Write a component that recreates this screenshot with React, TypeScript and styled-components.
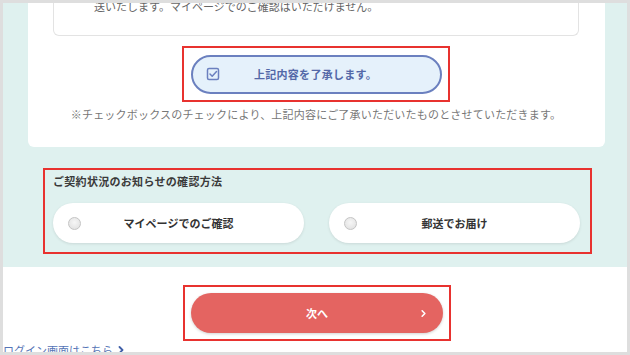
import styled, { createGlobalStyle } from "styled-components";

const GlobalStyle = createGlobalStyle`
  body {
    margin: 0;
    font-family: "Noto Sans CJK JP", "Noto Sans", sans-serif;
  }
`;

const Frame = styled.div`
  width: 630px;
  height: 355px;
  box-sizing: border-box;
  border: 3px solid #dedede;
  background: #ffffff;
  overflow: hidden;
  display: flex;
  flex-direction: column;
`;

const TealSection = styled.div`
  background: #dff1ef;
  padding: 0 22px 13px 25px;
`;

const Card = styled.div`
  background: #ffffff;
  border-radius: 0 0 6px 6px;
  padding: 0 26px 26px 25px;
`;

const InnerBox = styled.div`
  height: 33px;
  box-sizing: border-box;
  border: 1px solid #e3e3e3;
  border-top: none;
  border-radius: 0 0 6px 6px;
  padding-left: 40px;
  overflow: hidden;
`;

const InnerText = styled.p`
  margin: -4px 0 0;
  font-size: 11px;
  line-height: 14px;
  color: #666;
`;

// red annotation frame around a highlighted control
const Highlight = styled.div<{ $left?: number }>`
  width: 268px;
  height: 56px;
  box-sizing: border-box;
  border: 2px solid #e8322f;
  display: flex;
  align-items: center;
  justify-content: center;
  margin: ${(p) => (p.$left !== undefined ? `0 0 0 ${p.$left}px` : "0 auto")};
`;

const AgreeWrap = styled.div`
  padding-top: 10px;
`;

const AgreeButton = styled.button`
  width: 251px;
  height: 39px;
  box-sizing: border-box;
  border: 2px solid #6b80bf;
  border-radius: 20px;
  background: #e5f1fb;
  display: grid;
  grid-template-columns: 14px 1fr 14px;
  align-items: center;
  padding: 0 14px 0 13px;
  font-family: inherit;
  font-size: 11px;
  font-weight: 700;
  letter-spacing: 0.3px;
  color: #5368a8;
  cursor: pointer;
`;

const Note = styled.p`
  margin: 5px 0 0;
  font-size: 11px;
  line-height: 14px;
  letter-spacing: 0.2px;
  color: #777;
  text-align: center;
`;

const MethodBox = styled.div`
  margin: 21px 13px 0 15px;
  height: 86px;
  box-sizing: border-box;
  border: 2px solid #e8322f;
  padding: 4px 10px 9px 8px;
`;

const MethodTitle = styled.div`
  font-size: 11px;
  line-height: 14px;
  font-weight: 700;
  color: #3a3a3a;
  letter-spacing: 0.3px;
`;

const Options = styled.div`
  margin-top: 15px;
  display: grid;
  grid-template-columns: 251px 251px;
  gap: 25px;
`;

const OptionPill = styled.label`
  height: 40px;
  border-radius: 20px;
  background: #ffffff;
  box-shadow: 0 1px 3px rgba(0, 0, 0, 0.1);
  display: grid;
  grid-template-columns: 12px 1fr 12px;
  align-items: center;
  padding: 0 15px;
  font-size: 11px;
  font-weight: 700;
  color: #333;
  text-align: center;
  cursor: pointer;
`;

const Radio = styled.span`
  width: 11px;
  height: 11px;
  border-radius: 50%;
  border: 1px solid #c4c4c4;
  background: radial-gradient(circle at 50% 40%, #f6f6f6, #dedede);
`;

const NextWrap = styled.div`
  margin-top: 18px;
`;

const NextButton = styled.button`
  width: 252px;
  height: 40px;
  border: none;
  border-radius: 20px;
  background: #e46461;
  box-shadow: 0 1px 3px rgba(0, 0, 0, 0.18);
  display: grid;
  grid-template-columns: 10px 1fr 10px;
  align-items: center;
  padding: 0 14px;
  font-family: inherit;
  font-size: 11px;
  font-weight: 700;
  color: #ffffff;
  cursor: pointer;
`;

const LoginLink = styled.a`
  margin-top: 2px;
  display: flex;
  align-items: center;
  gap: 3px;
  font-size: 11px;
  line-height: 14px;
  color: #5574b6;
  text-decoration: none;
`;

const CheckIcon = () => (
  <svg width="14" height="14" viewBox="0 0 14 14" fill="none">
    <rect x="1.5" y="1.5" width="11" height="11" rx="1.5" stroke="#6b80bf" strokeWidth="1.5" />
    <path d="M4 7l2.2 2.2L10.5 4.6" stroke="#6b80bf" strokeWidth="1.5" strokeLinecap="round" strokeLinejoin="round" />
  </svg>
);

const Chevron = ({ color, size }: { color: string; size: number }) => (
  <svg width={size} height={size} viewBox="0 0 10 10" fill="none">
    <path d="M3.5 2l3 3-3 3" stroke={color} strokeWidth="1.8" strokeLinecap="round" strokeLinejoin="round" />
  </svg>
);

const App = () => {
  return (
    <>
      <GlobalStyle />
      <Frame>
        <TealSection>
          <Card>
            <InnerBox>
              <InnerText>送いたします。マイページでのご確認はいただけません。</InnerText>
            </InnerBox>
            <AgreeWrap>
              <Highlight>
                <AgreeButton>
                  <CheckIcon />
                  <span>上記内容を了承します。</span>
                  <span />
                </AgreeButton>
              </Highlight>
            </AgreeWrap>
            <Note>※チェックボックスのチェックにより、上記内容にご了承いただいたものとさせていただきます。</Note>
          </Card>
          <MethodBox>
            <MethodTitle>ご契約状況のお知らせの確認方法</MethodTitle>
            <Options>
              <OptionPill>
                <Radio />
                <span>マイページでのご確認</span>
                <span />
              </OptionPill>
              <OptionPill>
                <Radio />
                <span>郵送でお届け</span>
                <span />
              </OptionPill>
            </Options>
          </MethodBox>
        </TealSection>
        <NextWrap>
          <Highlight $left={180}>
            <NextButton>
              <span />
              <span>次へ</span>
              <Chevron color="#ffffff" size={9} />
            </NextButton>
          </Highlight>
        </NextWrap>
        <LoginLink href="#">
          ログイン画面はこちら
          <Chevron color="#3f5fa8" size={10} />
        </LoginLink>
      </Frame>
    </>
  );
};

export default App;
